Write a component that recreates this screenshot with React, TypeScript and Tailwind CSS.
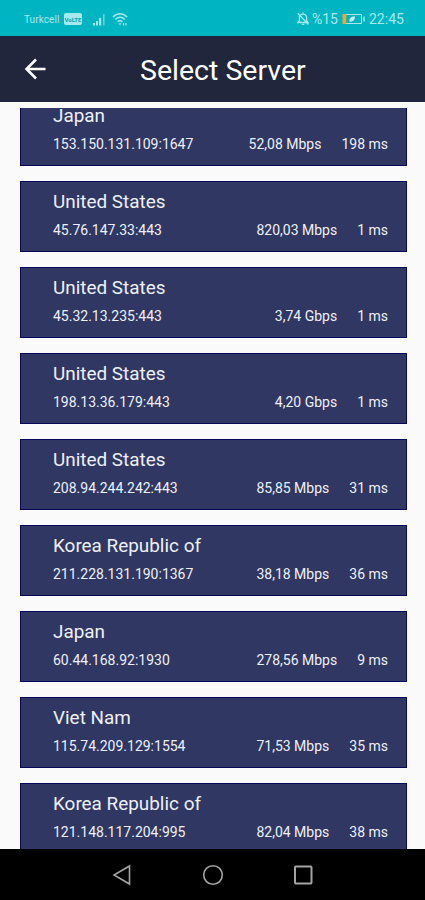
type ServerModel = {
    country: string;
    address: string;
    speed: string;
    ping: string;
};

const servers: ServerModel[] = [
    { country: 'Japan', address: '153.150.131.109:1647', speed: '52,08 Mbps', ping: '198 ms' },
    { country: 'United States', address: '45.76.147.33:443', speed: '820,03 Mbps', ping: '1 ms' },
    { country: 'United States', address: '45.32.13.235:443', speed: '3,74 Gbps', ping: '1 ms' },
    { country: 'United States', address: '198.13.36.179:443', speed: '4,20 Gbps', ping: '1 ms' },
    { country: 'United States', address: '208.94.244.242:443', speed: '85,85 Mbps', ping: '31 ms' },
    { country: 'Korea Republic of', address: '211.228.131.190:1367', speed: '38,18 Mbps', ping: '36 ms' },
    { country: 'Japan', address: '60.44.168.92:1930', speed: '278,56 Mbps', ping: '9 ms' },
    { country: 'Viet Nam', address: '115.74.209.129:1554', speed: '71,53 Mbps', ping: '35 ms' },
    { country: 'Korea Republic of', address: '121.148.117.204:995', speed: '82,04 Mbps', ping: '38 ms' },
];

const StatusBar = () => {
    return (
        <div className="flex h-9 shrink-0 items-center justify-between bg-[#00b5c1] pt-[2px] pr-[20px] pl-[24px] text-[#a5e9ed]">
            <div className="flex items-center">
                <span className="w-[37px] text-[10px] whitespace-nowrap tracking-[0.1px]">Turkcell</span>
                <span className="ml-[3px] flex h-[12px] w-[18px] items-center justify-center rounded-[2px] bg-[#a5e9ed] text-[6px] font-bold text-[#00a5b2]">
                    VoLTE
                </span>
                <svg className="ml-[11px]" width="13" height="13" viewBox="0 0 13 13" fill="currentColor">
                    <rect x="0" y="10" width="2" height="2.5" />
                    <rect x="3" y="8" width="2" height="4.5" />
                    <rect x="6" y="5" width="2.2" height="7.5" />
                    <rect x="10" y="1" width="1.6" height="11.5" opacity="0.6" />
                </svg>
                <svg className="ml-[6px]" width="17" height="15" viewBox="0 0 17 15" fill="none" stroke="currentColor" strokeWidth="1.5">
                    <path d="M1 5C5 .5 11 .5 15 5M3.3 7.4C6 4.5 10 4.5 12.7 7.4M5.6 9.8C7 8.3 9 8.3 10.4 9.8" />
                    <path d="M6.6 11.3h2.8L8 13.4z" fill="currentColor" stroke="none" />
                    <path d="M11.5 11v2.5M14 11v2.5" strokeWidth="1.2" />
                </svg>
            </div>
            <div className="flex items-center text-[14px]">
                <svg width="12" height="14" viewBox="0 0 12 14" fill="none" stroke="currentColor" strokeWidth="1.3">
                    <path d="M1 10.5h10L9.6 8.7V5.2C9.6 3.3 8 2.2 6 2.2S2.4 3.3 2.4 5.2v3.5zM6 .6v1.5M4.7 12.3h2.6M.8 1.3l10.6 11.2" />
                </svg>
                <span className="ml-[3px] w-[27px] whitespace-nowrap">%15</span>
                <svg className="ml-[3px]" width="24" height="12" viewBox="0 0 24 12" fill="none">
                    <path d="M4 1.5h15.5v9H4" stroke="currentColor" strokeWidth="1" />
                    <rect x="0.5" y="1" width="3.7" height="10" fill="#f2a52b" />
                    <path d="M7.5 8.7C6.8 5.6 8.8 3.6 13 3.3 13 7 11 9 7.5 8.7z" fill="#c9f4f3" />
                    <path d="M22 3.5v5" stroke="currentColor" strokeWidth="1.4" />
                </svg>
                <span className="ml-[3px] w-[36px] whitespace-nowrap">22:45</span>
            </div>
        </div>
    );
};

const Header = () => {
    return (
        <div className="flex h-[66px] shrink-0 items-center bg-[#22263d] text-white">
            <svg className="ml-[24px]" width="22" height="22" viewBox="0 0 22 22" fill="none" stroke="currentColor" strokeWidth="2.5">
                <path d="M21.5 11H2.5M12 1.5L2.5 11L12 20.5" />
            </svg>
            <h1 className="ml-[94px] pt-[5px] text-[28.5px] leading-none whitespace-nowrap">Select Server</h1>
        </div>
    );
};

const Server = (prop: ServerModel) => {
    return (
        <div className="mb-[14.4px] h-[71.6px] shrink-0 border border-[#06065a] bg-[#2f3762] pt-[8px] pr-[18px] pl-[32px] text-[#eef0fa]">
            <div className="text-[18.9px] leading-[24px]">{prop.country}</div>
            <div className="mt-[7.2px] flex text-[14px] leading-[18px] whitespace-nowrap">
                <span className="grow">{prop.address}</span>
                <span>{prop.speed}</span>
                <span className="ml-[20px]">{prop.ping}</span>
            </div>
        </div>
    );
};

const NavBar = () => {
    return (
        <div className="flex h-[51px] shrink-0 items-center bg-black pl-[112px] text-[#a3a3a3]">
            <svg width="20" height="22" viewBox="0 0 20 22" fill="none" stroke="currentColor" strokeWidth="1.6">
                <path d="M17.5 2v18L2 11z" />
            </svg>
            <svg className="ml-[70px]" width="22" height="22" viewBox="0 0 22 22" fill="none" stroke="currentColor" strokeWidth="1.6">
                <circle cx="11" cy="11" r="9.3" />
            </svg>
            <svg className="ml-[69px]" width="20" height="22" viewBox="0 0 20 22" fill="none" stroke="currentColor" strokeWidth="2">
                <rect x="2" y="2.5" width="16.5" height="17" rx="0.8" />
            </svg>
        </div>
    );
};

const App = () => {
    return (
        <div className="flex h-[900px] w-[425px] flex-col overflow-hidden bg-[#fafafa] font-[Roboto,sans-serif]">
            <StatusBar />
            <Header />
            <div className="mt-[6px] flex min-h-0 grow flex-col overflow-hidden pr-[18px] pl-[20px]">
                {/* the list is scrolled a little, so the first row is cut at the top */}
                <div className="-mt-[13.2px] flex flex-col">
                    {servers.map((server) => (
                        <Server key={server.address} {...server} />
                    ))}
                </div>
            </div>
            <NavBar />
        </div>
    );
};
export default App;
